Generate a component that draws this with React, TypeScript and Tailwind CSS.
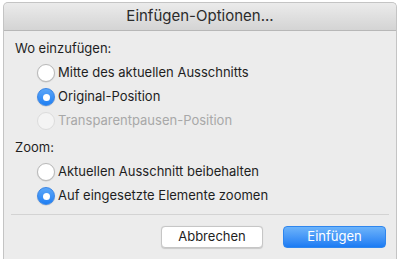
const Radio = ({ checked, disabled }: { checked?: boolean; disabled?: boolean }) => {
    if (checked) {
        return (
            <div className="w-[18px] h-[18px] rounded-full bg-gradient-to-b from-[#5aa6f8] to-[#1d7ff3] border border-[#3a86e6] flex items-center justify-center shadow-[0_0.5px_1px_rgba(0,0,0,0.2)]">
                <div className="w-[7px] h-[7px] rounded-full bg-white" />
            </div>
        );
    }
    return (
        <div
            className={
                disabled
                    ? "w-[18px] h-[18px] rounded-full bg-[#f4f4f4] border border-[#dcdcdc]"
                    : "w-[18px] h-[18px] rounded-full bg-white border border-[#b9b9b9] shadow-[0_0.5px_1px_rgba(0,0,0,0.15)]"
            }
        />
    );
};

const Option = ({ label, checked, disabled }: { label: string; checked?: boolean; disabled?: boolean }) => (
    <div className="h-[24px] flex items-center gap-[3px] pl-[33px]">
        <Radio checked={checked} disabled={disabled} />
        <span className={disabled ? "text-[#a8a8a8]" : "text-[#1e1e1e]"}>{label}</span>
    </div>
);

const App = () => {
    return (
        <div className="w-[400px] h-[259px] bg-white pt-[2px] px-[3px] font-['Inter','Liberation_Sans',sans-serif] text-[13px] overflow-hidden">
            <div className="h-[257px] bg-[#ececec] border border-[#c4c4c4] border-b-0 rounded-t-[5px] flex flex-col">
                <div className="h-[28px] shrink-0 rounded-t-[5px] bg-gradient-to-b from-[#ebebeb] to-[#d4d4d4] border-b border-[#b7b7b7] flex items-center justify-center text-[15px] text-[#2b2b2b]">
                    Einfügen-Optionen...
                </div>
                <div className="pl-[11px] pt-[8px] leading-[18px] text-[#1e1e1e]">Wo einzufügen:</div>
                <div className="mt-[4px] flex flex-col">
                    <Option label="Mitte des aktuellen Ausschnitts" />
                    <Option label="Original-Position" checked />
                    <Option label="Transparentpausen-Position" disabled />
                </div>
                <div className="pl-[11px] mt-[5px] leading-[18px] text-[#1e1e1e]">Zoom:</div>
                <div className="mt-[4px] flex flex-col">
                    <Option label="Aktuellen Ausschnitt beibehalten" />
                    <Option label="Auf eingesetzte Elemente zoomen" checked />
                </div>
                <div className="mx-[7px] mt-[6px] h-px bg-[#d3d3d3]" />
                <div className="mt-[11px] pr-[10px] flex justify-end gap-[20px]">
                    <button className="w-[102px] h-[22px] rounded-[4px] bg-white border border-[#c6c6c6] shadow-[0_0.5px_1px_rgba(0,0,0,0.15)] text-[#1e1e1e] text-[13px]">
                        Abbrechen
                    </button>
                    <button className="w-[103px] h-[22px] rounded-[4px] bg-gradient-to-b from-[#6cb3fa] to-[#1a7bf3] border border-[#2f86ee] text-white text-[13px]">
                        Einfügen
                    </button>
                </div>
            </div>
        </div>
    );
};

export default App;
